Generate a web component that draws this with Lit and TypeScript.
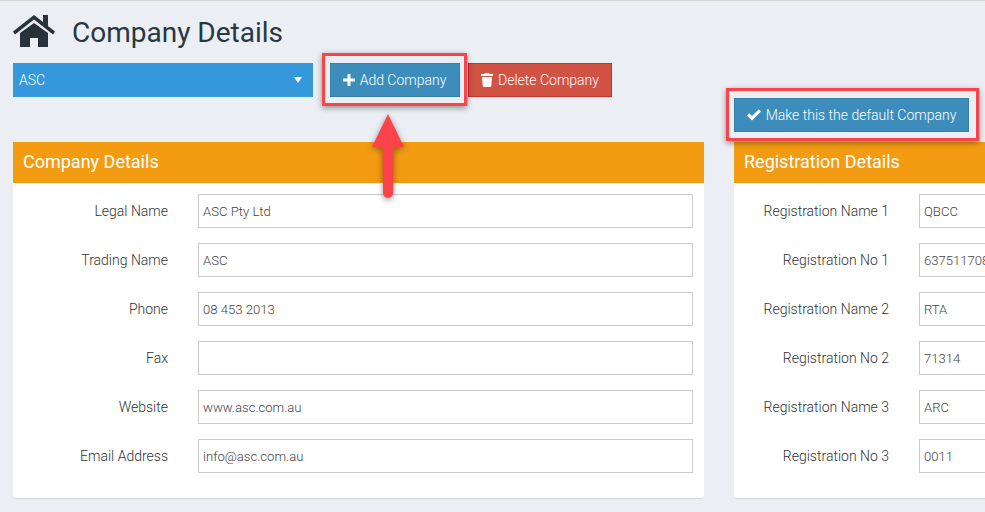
import { LitElement, html, css } from "lit";
import { customElement } from "lit/decorators.js";

const left = [
  ["Legal Name", "ASC Pty Ltd"],
  ["Trading Name", "ASC"],
  ["Phone", "08 453 2013"],
  ["Fax", ""],
  ["Website", "www.asc.com.au"],
  ["Email Address", "info@asc.com.au"],
];
const right = [
  ["Registration Name 1", "QBCC"],
  ["Registration No 1", "637511708"],
  ["Registration Name 2", "RTA"],
  ["Registration No 2", "71314"],
  ["Registration Name 3", "ARC"],
  ["Registration No 3", "0011"],
];

@customElement("app-root")
export class AppRoot extends LitElement {
  static styles = css`
    :host {
      display: block;
      position: relative;
      width: 985px;
      height: 512px;
      overflow: hidden;
      background: #ebeef3;
      font-family: Roboto, "Liberation Sans", sans-serif;
      font-size: 14px;
      font-weight: 300;
      color: #2c3e50;
      box-sizing: border-box;
      border-top: 1px solid #d6d6d6;
    }
    .page {
      display: grid;
      grid-template-columns: 691px 691px;
      column-gap: 30px;
      padding-left: 13px;
    }
    .head { height: 141px; display: flex; flex-direction: column; }
    .title { display: flex; align-items: center; height: 62px; gap: 17px; }
    .title svg { width: 42px; height: 42px; display: block; margin-top: -2px; }
    h1 { margin: 0; padding-top: 2px; font-size: 28px; font-weight: 400; color: #283744; line-height: 60px; }
    .tools { display: flex; align-items: flex-start; }
    .select {
      width: 300px; height: 34px; background: #3498db; color: #fff;
      display: flex; align-items: center; justify-content: space-between;
      padding: 0 6px; box-sizing: border-box;
    }
    .caret { width: 0; height: 0; border-left: 4.5px solid transparent; border-right: 4.5px solid transparent; border-top: 6px solid #fff; margin-right: 5px; }
    .btn {
      height: 34px; box-sizing: border-box; display: flex; align-items: center; justify-content: center;
      gap: 4px; color: #fff; border: 1px solid; white-space: nowrap; padding-right: 2px;
    }
    .btn svg { display: block; }
    .blue { background: #3c8dbc; border-color: #367fa9; }
    .red { background: #d15344; border-color: #c9302c; width: 144px; margin-left: 8px; padding-right: 1px; }
    .add { width: 130px; margin-left: 17px; position: relative; }
    .mark::after {
      content: ""; position: absolute; border: 3px solid #fc4349;
      box-shadow: 0 2px 6px rgba(0, 0, 0, 0.4);
      box-sizing: border-box; pointer-events: none;
    }
    .add::after { inset: -11px -8px -10px -9px; }
    .right-head { justify-content: flex-end; padding-bottom: 10px; box-sizing: border-box; }
    .def { width: 235px; position: relative; padding-right: 1px; }
    .def::after { inset: -11px -11px -10px -9px; }
    .panel {
      background: #fff; border-radius: 0 0 3px 3px; height: 357px;
      border-bottom: 1px solid #d2d6de; box-sizing: border-box;
    }
    .panel header {
      background: #f39c12; color: #fff; height: 41px; display: flex; align-items: center;
      padding: 0 0 2px 10px; box-sizing: border-box; font-size: 18px; font-weight: 400;
    }
    .rows { display: flex; flex-direction: column; gap: 15px; padding-top: 11px; }
    .row { display: grid; grid-template-columns: 155px 495px; column-gap: 30px; align-items: center; height: 34px; }
    .row label { text-align: right; color: #333; }
    .input {
      height: 34px; box-sizing: border-box; border: 1px solid #ccc; background: #fff;
      padding: 0 4px; display: flex; align-items: center; color: #444; font-size: 13.1px;
      overflow: hidden; white-space: nowrap;
    }
    .arrow { position: absolute; left: 364px; top: 108px; width: 48px; height: 100px; overflow: visible; filter: drop-shadow(0 2px 3px rgba(0, 0, 0, 0.4)); }
  `;

  private rows(items: string[][]) {
    return html`<div class="rows">
      ${items.map(
        ([l, v]) => html`<div class="row"><label>${l}</label><div class="input">${v}</div></div>`
      )}
    </div>`;
  }

  render() {
    return html`
      <div class="page">
        <div class="head">
          <div class="title">
            <svg viewBox="13 10 42 42" fill="#283339" aria-hidden="true">
              <path d="M34 15 L43 22 V15 H48 V26 L55 31.500 L53 34.500 L34 19.500 L15 34.500 L13 31.500 Z" />
              <path d="M34 23 L48 33 V47 H38 V38 H30 V47 H20 V33 Z" />
            </svg>
            <h1>Company Details</h1>
          </div>
          <div class="tools">
            <div class="select"><span>ASC</span><span class="caret"></span></div>
            <div class="btn blue add mark">
              <svg width="14" height="14" viewBox="0 0 14 14" fill="#fff"><path d="M5.500 1h3v4.500H13v3H8.500V13h-3V8.500H1v-3h4.500z"/></svg>
              <span>Add Company</span>
            </div>
            <div class="btn red">
              <svg width="14" height="14" viewBox="0 0 14 14" fill="#fff"><path d="M1 1h3.500l.5-1h4l.5 1H13V3H1zM2 4h10l-.7 8.800a1.200 1.200 0 0 1-1.200 1.200H3.900a1.200 1.200 0 0 1-1.200-1.200z"/></svg>
              <span>Delete Company</span>
            </div>
          </div>
        </div>
        <div class="head right-head">
          <div class="btn blue def mark">
            <svg width="16" height="14" viewBox="0 0 16 14" fill="#fff"><path d="M1 7.500 3.200 5.200 6 8 12.800 1.200 15 3.500 6 12.500z"/></svg>
            <span>Make this the default Company</span>
          </div>
        </div>
        <section class="panel"><header>Company Details</header>${this.rows(left)}</section>
        <section class="panel"><header>Registration Details</header>${this.rows(right)}</section>
      </div>
      <svg class="arrow" viewBox="0 0 48 100" aria-hidden="true">
        <path fill="#fc4349" d="M24 5 L40 38 H29.500 L29 84 a5 5 0 0 1 -10 0 L18.500 38 H8 Z" />
      </svg>
    `;
  }
}
